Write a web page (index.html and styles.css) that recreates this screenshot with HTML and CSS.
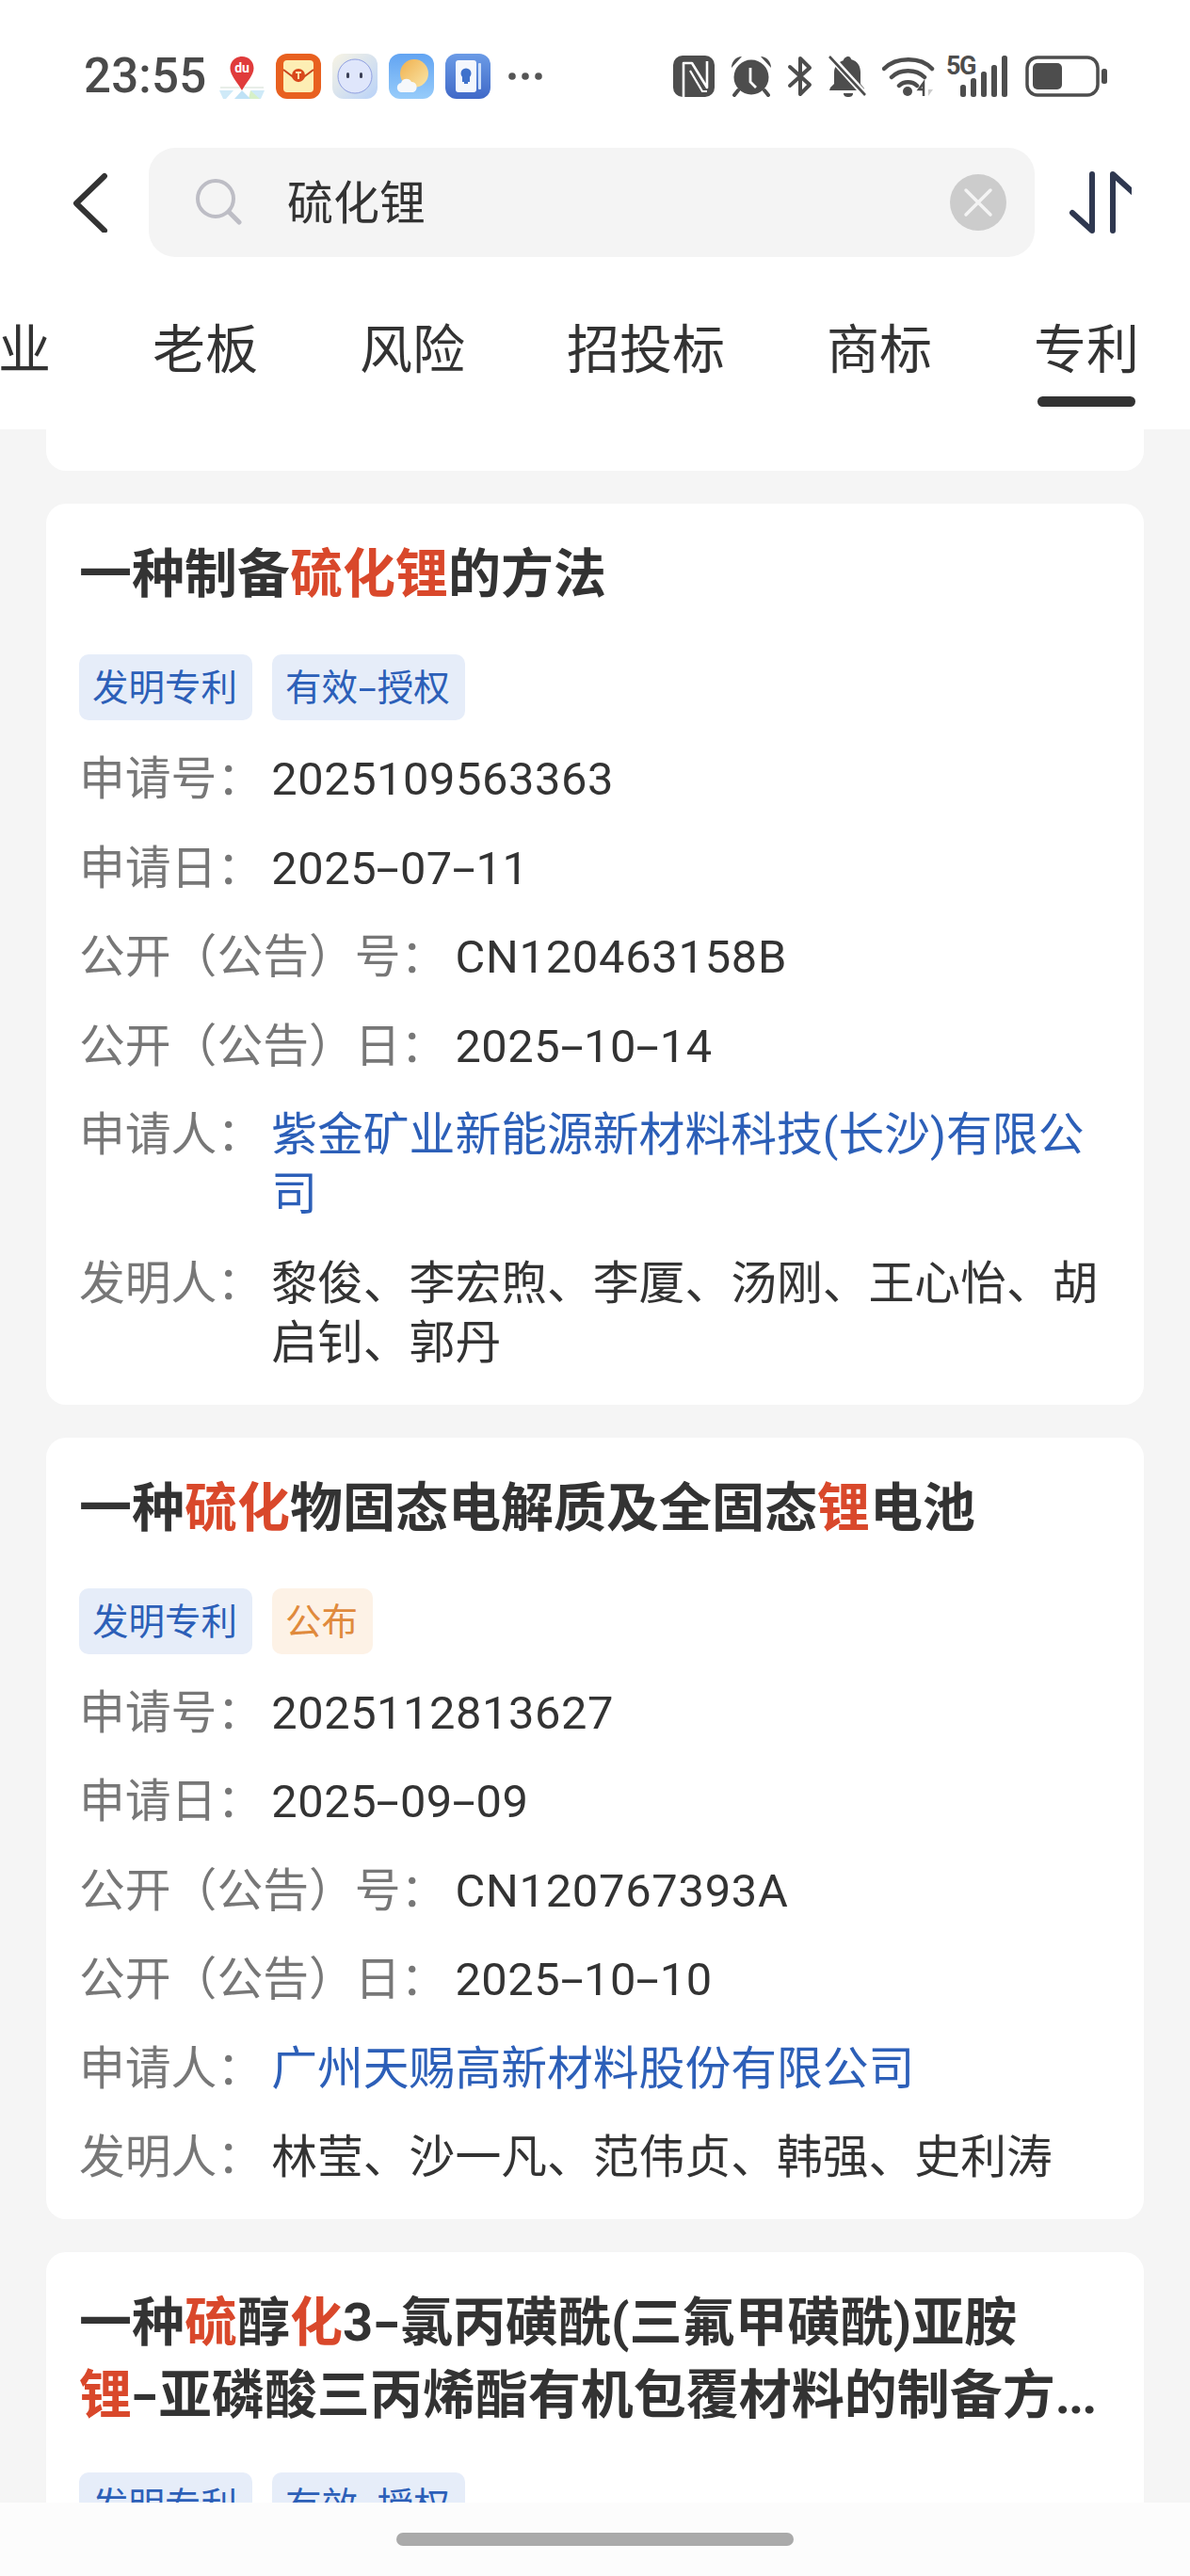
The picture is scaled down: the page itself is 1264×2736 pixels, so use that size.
FILE: index.html
```html
<!DOCTYPE html>
<html lang="zh-CN">
<head>
<meta charset="utf-8">
<title>硫化锂</title>
<link rel="stylesheet" href="styles.css">
</head>
<body>
<header class="top">
  <div class="status">
    <div class="status-left">
      <span class="time">23:55</span>
      <svg class="n-du" viewBox="0 0 48 46"><path d="M0 36h15L7 45H4zM48 36H33l8 9h3z" fill="#cfeaf8"/><path d="M33 36l10 9H31z" fill="#d6f0c8"/><path d="M24 36l-8 9h17z" fill="#bfe2f6"/><path d="M1 33h46" stroke="#e8eee8" stroke-width="2"/><path d="M24 0c7.500 0 12.500 5.500 12.500 12.500C36.500 20 29 27 24 36 19 27 11.500 20 11.500 12.500 11.500 5.500 16.500 0 24 0z" fill="#e03b3b"/><text x="24" y="17" class="du">du</text></svg>
      <svg class="n-app" viewBox="0 0 48 48"><rect width="48" height="48" rx="12" fill="#e8601f"/><rect x="8" y="7" width="32" height="34" rx="4" fill="#fdeeb4"/><path d="M8 17l16 12 16-12" fill="none" stroke="#c9451c" stroke-width="2"/><circle cx="24" cy="23" r="7" fill="#d9481c"/><path d="M21 20h6M24 20v7" stroke="#fdeeb4" stroke-width="1.800"/></svg>
      <svg class="n-app" viewBox="0 0 48 48"><defs><linearGradient id="rb" x1="0" y1="0" x2="1" y2="1"><stop offset="0" stop-color="#f8f4e4"/><stop offset="1" stop-color="#b9d2f8"/></linearGradient></defs><rect width="48" height="48" rx="12" fill="url(#rb)"/><circle cx="24" cy="24" r="18" fill="#dfe6fb" stroke="#8f9fe0" stroke-width="1"/><rect x="15" y="20" width="3" height="6" rx="1.500" fill="#3a3f55"/><rect x="29" y="20" width="3" height="6" rx="1.500" fill="#3a3f55"/></svg>
      <svg class="n-app" viewBox="0 0 48 48"><defs><linearGradient id="wb" x1="0" y1="0" x2="0" y2="1"><stop offset="0" stop-color="#62a4f2"/><stop offset="1" stop-color="#97ccfa"/></linearGradient><linearGradient id="ws" x1="0" y1="0" x2="1" y2="1"><stop offset="0" stop-color="#f0b04e"/><stop offset="1" stop-color="#fae6a8"/></linearGradient></defs><rect width="48" height="48" rx="12" fill="url(#wb)"/><circle cx="27" cy="21" r="15" fill="url(#ws)"/><path d="M13 41c-5 0-6-9 0-10 1-5 9-6 11-1 6-1 8 9 2 11z" fill="#f6f8fb"/></svg>
      <svg class="n-app" viewBox="0 0 48 48"><defs><linearGradient id="bb" x1="0" y1="0" x2="0" y2="1"><stop offset="0" stop-color="#6b9be6"/><stop offset="1" stop-color="#4069c8"/></linearGradient></defs><rect width="48" height="48" rx="12" fill="url(#bb)"/><rect x="11" y="7" width="22" height="34" rx="3" fill="#f4f7fd"/><rect x="35" y="10" width="3" height="28" rx="1" fill="#cfe0f8"/><circle cx="22" cy="21" r="5.500" fill="#3f72cc"/><path d="M19 25h6v4h-6zM20 31h4" stroke="#3f72cc" stroke-width="2" fill="#3f72cc"/></svg>
      <svg class="n-dots" viewBox="0 0 36 10"><circle cx="4" cy="5" r="3.800"/><circle cx="18" cy="5" r="3.800"/><circle cx="32" cy="5" r="3.800"/></svg>
    </div>
    <div class="status-right">
      <svg class="s-nfc" viewBox="0 0 44 44"><rect width="44" height="44" rx="10" fill="#4d4d4d"/><path d="M11 44V8h9l16 26V6M20 8l-1 0" fill="none" stroke="#fff" stroke-width="2.600" stroke-linejoin="round"/><path d="M18 16l13 22h5" fill="none" stroke="#fff" stroke-width="2.200" stroke-linejoin="round"/></svg>
      <svg class="s-alarm" viewBox="0 0 44 44"><path d="M1 13C1 6 6 1 12 1zM43 13c0-7-5-12-11-12z" fill="#4d4d4d"/><circle cx="22" cy="23" r="18.500" fill="#4d4d4d"/><path d="M8 37l-4 5M36 37l4 5" stroke="#4d4d4d" stroke-width="4" stroke-linecap="round"/><path d="M21 13v15l6 6" fill="none" stroke="#fff" stroke-width="2.800"/></svg>
      <svg class="s-bt" viewBox="0 0 28 44"><path d="M3 12l21 19-10 10V3l10 10L3 32" fill="none" stroke="#4d4d4d" stroke-width="4" stroke-linejoin="round" stroke-linecap="round"/></svg>
      <svg class="s-bell" viewBox="0 0 42 44"><path d="M21 1c2 0 3 2 3 3 7 2 10 7 10 14v12l4 5v2H1l1-3 4-4V18c0-6 4-11 10-13 0-2 3-4 5-4z" fill="#4d4d4d"/><path d="M16 40h10c0 3-2 4-5 4s-5-1-5-4z" fill="#4d4d4d"/><path d="M1 0l40 44" stroke="#fff" stroke-width="7"/><path d="M1 1l38 41" stroke="#4d4d4d" stroke-width="2.600"/></svg>
      <svg class="s-wifi" viewBox="0 0 56 44"><path d="M2 14C15 1 41 1 53 14M10 23c9-9 26-9 35 0M18 32c5-5 14-5 19 0" fill="none" stroke="#4d4d4d" stroke-width="4.500" stroke-linecap="round"/><circle cx="27" cy="38" r="5" fill="#4d4d4d"/><path d="M44 43V29l-5 7h5" fill="none" stroke="#4d4d4d" stroke-width="2.500"/><path d="M49 29v14l5-7h-5" fill="#ccc"/></svg>
      <div class="s-signal">
        <span class="five-g">5G</span>
        <svg class="s-bars" viewBox="0 0 52 44"><rect x="0" y="31" width="6" height="13" rx="2.500"/><rect x="11" y="24" width="6" height="20" rx="2.500"/><rect x="22" y="17" width="6" height="27" rx="2.500"/><rect x="33" y="10" width="6" height="34" rx="2.500"/><rect x="44" y="0" width="6" height="44" rx="2.500"/></svg>
      </div>
      <svg class="s-batt" viewBox="0 0 88 44"><rect x="2" y="2" width="75" height="40" rx="11" fill="none" stroke="#4d4d4d" stroke-width="3.500"/><rect x="8" y="8" width="31" height="28" rx="5" fill="#4d4d4d"/><rect x="81" y="14" width="6" height="16" rx="2.500" fill="#4d4d4d"/></svg>
    </div>
  </div>

  <div class="search-row">
    <svg class="back" viewBox="0 0 43 64"><path d="M36 4L6 33l30 29" fill="none" stroke="#333" stroke-width="6" stroke-linecap="round" stroke-linejoin="round"/></svg>
    <div class="search">
      <svg class="glass" viewBox="0 0 50 50"><circle cx="21" cy="21" r="19" fill="none" stroke="#bdbdc5" stroke-width="4"/><path d="M35 35l11 11" stroke="#bdbdc5" stroke-width="5" stroke-linecap="round"/></svg>
      <span class="query">硫化锂</span>
      <svg class="clear" viewBox="0 0 60 60"><circle cx="30" cy="30" r="30" fill="#ccc"/><path d="M17 17l26 26M43 17L17 43" stroke="#f4f4f4" stroke-width="3.500" stroke-linecap="round"/></svg>
    </div>
    <svg class="sort" viewBox="0 0 70 66"><path d="M28 3v60L7 44M50 63V3l21 19" fill="none" stroke="#2f3850" stroke-width="6" stroke-linecap="round" stroke-linejoin="round"/></svg>
  </div>

  <nav class="tabs">
    <span class="tab">业</span>
    <span class="tab">老板</span>
    <span class="tab">风险</span>
    <span class="tab">招投标</span>
    <span class="tab">商标</span>
    <span class="tab tab-active">专利</span>
  </nav>
</header>

<main class="list">
  <div class="card-stub"></div>

  <article class="card">
    <h2 class="title">一种制备<em>硫化锂</em>的方法</h2>
    <div class="tags">
      <span class="tag tag-blue">发明专利</span>
      <span class="tag tag-blue">有效<span class="dash">-</span>授权</span>
    </div>
    <dl class="rows">
      <div class="row"><dt>申请号：</dt><dd class="num">2025109563363</dd></div>
      <div class="row"><dt>申请日：</dt><dd class="num">2025<span class="dash">-</span>07<span class="dash">-</span>11</dd></div>
      <div class="row"><dt>公开（公告）号：</dt><dd class="code">CN120463158B</dd></div>
      <div class="row"><dt>公开（公告）日：</dt><dd class="num">2025<span class="dash">-</span>10<span class="dash">-</span>14</dd></div>
      <div class="row"><dt>申请人：</dt><dd class="link">紫金矿业新能源新材料科技(长沙)有限公司</dd></div>
      <div class="row"><dt>发明人：</dt><dd>黎俊、李宏煦、李厦、汤刚、王心怡、胡启钊、郭丹</dd></div>
    </dl>
  </article>

  <article class="card">
    <h2 class="title">一种<em>硫化</em>物固态电解质及全固态<em>锂</em>电池</h2>
    <div class="tags">
      <span class="tag tag-blue">发明专利</span>
      <span class="tag tag-orange">公布</span>
    </div>
    <dl class="rows">
      <div class="row"><dt>申请号：</dt><dd class="num">2025112813627</dd></div>
      <div class="row"><dt>申请日：</dt><dd class="num">2025<span class="dash">-</span>09<span class="dash">-</span>09</dd></div>
      <div class="row"><dt>公开（公告）号：</dt><dd class="code">CN120767393A</dd></div>
      <div class="row"><dt>公开（公告）日：</dt><dd class="num">2025<span class="dash">-</span>10<span class="dash">-</span>10</dd></div>
      <div class="row"><dt>申请人：</dt><dd class="link">广州天赐高新材料股份有限公司</dd></div>
      <div class="row"><dt>发明人：</dt><dd>林莹、沙一凡、范伟贞、韩强、史利涛</dd></div>
    </dl>
  </article>

  <article class="card">
    <h2 class="title">一种<em>硫</em>醇<em>化</em>3<span class="dash">-</span>氯丙磺酰(三氟甲磺酰)亚胺<br><em>锂</em><span class="dash">-</span>亚磷酸三丙烯酯有机包覆材料的制备方<span class="dots">...</span></h2>
    <div class="tags tags-tight">
      <span class="tag tag-blue">发明专利</span>
      <span class="tag tag-blue">有效<span class="dash">-</span>授权</span>
    </div>
  </article>
</main>

<footer class="gesture"><div class="handle"></div></footer>
</body>
</html>
```
FILE: styles.css
```css
* { box-sizing: border-box; }
html, body { margin: 0; padding: 0; }
body {
  width: 1264px;
  height: 2736px;
  display: flex;
  flex-direction: column;
  overflow: hidden;
  background: #f5f5f5;
  font-family: Roboto, "Noto Sans CJK SC", sans-serif;
  color: #333;
}

.top { background: #fff; flex: none; }

.status {
  height: 157px;
  padding: 57px 87px 0 89px;
  display: flex;
  justify-content: space-between;
  align-items: flex-start;
}
.status-left { display: flex; align-items: flex-start; }
.status-right { display: flex; align-items: flex-start; padding-top: 2px; }
.time {
  font-size: 51px;
  line-height: 48px;
  font-weight: 500;
  color: #4a4a4a;
  width: 144px;
  letter-spacing: 0.2px;
}
.n-du { width: 48px; height: 46px; margin-top: 3px; margin-right: 12px; }
.du { font: 700 14px Roboto, sans-serif; fill: #fff; text-anchor: middle; }
.n-app { width: 48px; height: 48px; margin-right: 12px; }
.n-dots { width: 36px; height: 10px; fill: #555; margin-top: 19px; margin-left: 7px; }

.s-nfc { width: 44px; height: 44px; margin-right: 17px; }
.s-alarm { width: 44px; height: 44px; margin-right: 16px; }
.s-bt { width: 28px; height: 44px; margin-right: 16px; }
.s-bell { width: 42px; height: 44px; margin-right: 15px; }
.s-wifi { width: 56px; height: 44px; margin-right: 12px; }
.s-signal { width: 67px; height: 44px; margin-right: 17px; position: relative; }
.five-g {
  position: absolute;
  left: 0;
  top: 0;
  font-size: 27px;
  line-height: 22px;
  font-weight: 700;
  color: #4d4d4d;
  letter-spacing: -1.500px;
}
.s-bars { position: absolute; right: 0; top: 0; width: 52px; height: 44px; fill: #4d4d4d; }
.s-batt { width: 88px; height: 44px; }

.search-row {
  height: 116px;
  padding-left: 75px;
  display: flex;
  align-items: center;
}
.back { width: 43px; height: 64px; margin-right: 40px; }
.search {
  width: 941px;
  height: 116px;
  border-radius: 28px;
  background: #f4f4f4;
  display: flex;
  align-items: center;
  padding: 0 30px 0 50px;
}
.glass { width: 50px; height: 50px; margin-right: 47px; }
.query { font-size: 49px; line-height: 63px; padding-top: 2px; color: #333; flex: 1; }
.clear { width: 60px; height: 60px; }
.sort { width: 70px; height: 66px; margin-left: 33px; }

.tabs {
  height: 183px;
  padding: 61px 0 0;
  margin-left: -2px;
  display: flex;
  gap: 108px;
  overflow: hidden;
}
.tab {
  font-size: 56px;
  line-height: 76px;
  color: #333;
  display: flex;
  flex-direction: column;
  align-items: center;
  flex: none;
}
.tab-active::after {
  content: "";
  width: 104px;
  height: 11px;
  margin-top: 11px;
  border-radius: 6px;
  background: #333;
}

.list {
  flex: 1;
  min-height: 0;
  overflow: hidden;
  padding: 0 49px;
  display: flex;
  flex-direction: column;
  gap: 35px;
}
.card-stub {
  flex: none;
  height: 44px;
  background: #fff;
  border-radius: 0 0 21px 21px;
}
.card {
  flex: none;
  background: #fff;
  border-radius: 21px;
  padding: 37px 35px 34px;
}
.title {
  margin: 0;
  font-size: 56px;
  line-height: 77px;
  font-weight: 700;
  color: #333;
}
.title em { font-style: normal; color: #d9482b; }
.dots { letter-spacing: -2px; }

.dash {
  display: inline-block;
  margin: 0 0.11em;
  transform: scaleX(1.8);
}
.title .dash { margin: 0 0.06em; transform: scaleX(1.45); }
.tag .dash { margin: 0 0.13em; }

.tags { display: flex; gap: 21px; margin-top: 46px; }
.tags-tight { margin-top: 43px; }
.tag {
  height: 70px;
  padding: 1px 16px 0 14px;
  border-radius: 10px;
  font-size: 38.500px;
  line-height: 69px;
}
.tag-blue { background: #e6edf9; color: #2c5fb8; }
.tag-orange { background: #fdf2e6; color: #e08a3c; }

.rows {
  margin: 31px 0 0;
  display: flex;
  flex-direction: column;
  gap: 31.500px;
}
.row {
  display: flex;
  font-size: 48.800px;
  line-height: 63px;
}
.row dt { flex: none; color: #777; margin-right: 9px; }
.row dd { margin: 0; color: #333; flex: 1; min-width: 0; }
.row dd.num { letter-spacing: 0.550px; }
.row dd.code { letter-spacing: 0.750px; }
.row dd.link { color: #2c5fb8; }

.gesture {
  flex: none;
  height: 78px;
  background: #fcfcfc;
  display: flex;
  justify-content: center;
  padding-top: 32px;
}
.handle {
  width: 422px;
  height: 14px;
  border-radius: 7px;
  background: #aaa;
}
```
